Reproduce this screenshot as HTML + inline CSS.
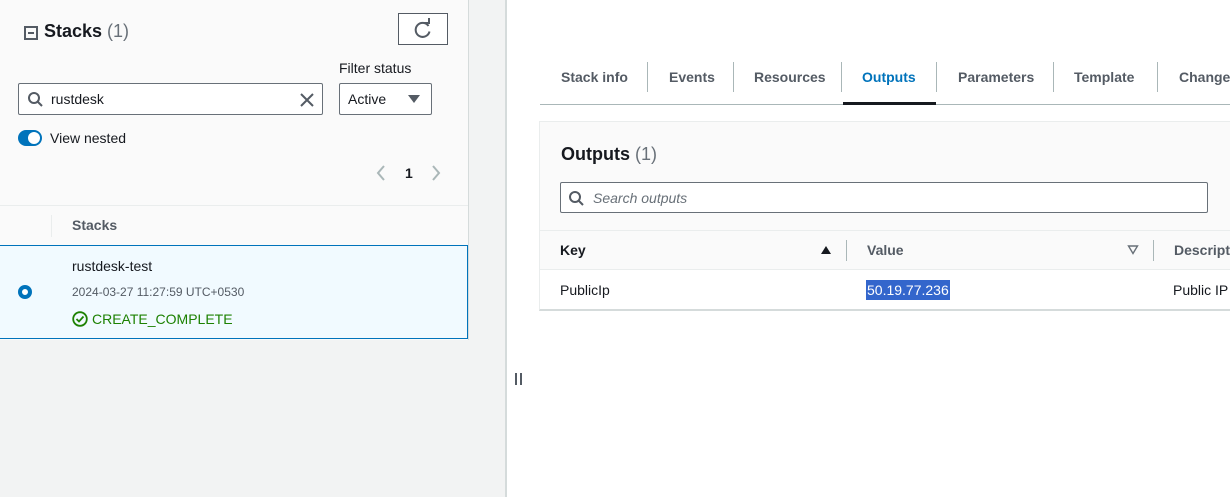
<!DOCTYPE html><html><head><style>
*{box-sizing:border-box;margin:0;padding:0}
body{width:1230px;height:497px;overflow:hidden;font-family:"Liberation Sans",sans-serif;background:#fff;position:relative;color:#16191f}
.abs{position:absolute}
</style></head><body>
<div class="abs" style="left:0;top:0;width:507px;height:497px;background:#f2f3f3;border-right:2px solid #d5dbdb"></div>
<div class="abs" style="left:0;top:0;width:469px;height:340px;background:#fafafa;border-right:1px solid #d5dbdb"></div>
<!-- header -->
<div class="abs" style="left:24px;top:26px;width:14px;height:14px;border:2px solid #545b64"><div style="position:absolute;left:2px;top:4px;width:6px;height:2px;background:#545b64"></div></div>
<div class="abs" style="left:44px;top:21px;font-size:18px;font-weight:bold">Stacks <span style="font-weight:normal;color:#687078">(1)</span></div>
<div class="abs" style="left:398px;top:13px;width:50px;height:32px;border:1px solid #545b64;background:#fff">
<svg width="50" height="32" style="position:absolute;left:-1px;top:-1px"><path d="M30.5 13 A7 7 0 1 0 31.5 18.5" fill="none" stroke="#545b64" stroke-width="2"/><path d="M26 10 L31 10 L31 5" fill="none" stroke="#545b64" stroke-width="2"/></svg></div>
<div class="abs" style="left:339px;top:60px;font-size:14px">Filter status</div>
<div class="abs" style="left:18px;top:83px;width:305px;height:32px;border:1px solid #687078;background:#fff;border-radius:2px">
<svg class="abs" style="left:8px;top:7px" width="18" height="18"><circle cx="7" cy="7" r="5" fill="none" stroke="#545b64" stroke-width="2"/><path d="M11 11 L15 15" stroke="#545b64" stroke-width="2"/></svg>
<span class="abs" style="left:32px;top:7px;font-size:14px">rustdesk</span>
<svg class="abs" style="left:280px;top:8px" width="16" height="16"><path d="M2 2 L14 14 M14 2 L2 14" stroke="#545b64" stroke-width="2"/></svg></div>
<div class="abs" style="left:339px;top:83px;width:93px;height:32px;border:1px solid #687078;background:#fff;border-radius:2px">
<span class="abs" style="left:8px;top:7px;font-size:14px">Active</span>
<svg class="abs" style="left:68px;top:10px" width="12" height="10"><path d="M0 1 L12 1 L6 9Z" fill="#545b64"/></svg></div>
<div class="abs" style="left:18px;top:130px;width:24px;height:16px;border-radius:8px;background:#0073bb"><div style="position:absolute;left:10px;top:2px;width:12px;height:12px;border-radius:6px;background:#fff"></div></div>
<div class="abs" style="left:50px;top:130px;font-size:14px">View nested</div>
<svg class="abs" style="left:375px;top:164px" width="70" height="18"><path d="M9 2 L3 9 L9 16" fill="none" stroke="#aab7b8" stroke-width="2"/><path d="M58 2 L64 9 L58 16" fill="none" stroke="#aab7b8" stroke-width="2"/></svg>
<div class="abs" style="left:405px;top:165px;font-size:14px;font-weight:bold">1</div>
<div class="abs" style="left:0;top:205px;width:468px;height:1px;background:#eaeded"></div>
<div class="abs" style="left:51px;top:215px;width:1px;height:22px;background:#eaeded"></div>
<div class="abs" style="left:72px;top:217px;font-size:14px;font-weight:bold;color:#545b64">Stacks</div>
<div class="abs" style="left:0;top:245px;width:468px;height:94px;background:#f1faff;border:1px solid #0073bb;border-left:none"></div>
<div class="abs" style="left:18px;top:285px;width:14px;height:14px;border-radius:7px;border:4px solid #0073bb;background:#fff"></div>
<div class="abs" style="left:72px;top:258px;font-size:14px">rustdesk-test</div>
<div class="abs" style="left:72px;top:285px;font-size:12px;color:#545b64">2024-03-27 11:27:59 UTC+0530</div>
<svg class="abs" style="left:72px;top:311px" width="16" height="16"><circle cx="8" cy="8" r="6.8" fill="none" stroke="#1d8102" stroke-width="1.8"/><path d="M4.5 8 L7 10.5 L11.5 5.5" fill="none" stroke="#1d8102" stroke-width="1.8"/></svg>
<div class="abs" style="left:92px;top:311px;font-size:14px;color:#1d8102">CREATE_COMPLETE</div>
<div class="abs" style="left:515px;top:373px;width:2px;height:12px;background:#545b64"></div>
<div class="abs" style="left:520px;top:373px;width:2px;height:12px;background:#545b64"></div>
<!-- tabs -->
<div class="abs" style="left:540px;top:104px;width:690px;height:1px;background:#aab7b8"></div>
<div class="abs" style="left:561px;top:69px;font-size:14px;font-weight:bold;color:#545b64">Stack info</div>
<div class="abs" style="left:669px;top:69px;font-size:14px;font-weight:bold;color:#545b64">Events</div>
<div class="abs" style="left:754px;top:69px;font-size:14px;font-weight:bold;color:#545b64">Resources</div>
<div class="abs" style="left:862px;top:69px;font-size:14px;font-weight:bold;color:#0073bb">Outputs</div>
<div class="abs" style="left:958px;top:69px;font-size:14px;font-weight:bold;color:#545b64">Parameters</div>
<div class="abs" style="left:1074px;top:69px;font-size:14px;font-weight:bold;color:#545b64">Template</div>
<div class="abs" style="left:1179px;top:69px;font-size:14px;font-weight:bold;color:#545b64">Change</div>
<div class="abs" style="left:647px;top:62px;width:1px;height:30px;background:#aab7b8"></div>
<div class="abs" style="left:733px;top:62px;width:1px;height:30px;background:#aab7b8"></div>
<div class="abs" style="left:841px;top:62px;width:1px;height:30px;background:#aab7b8"></div>
<div class="abs" style="left:936px;top:62px;width:1px;height:30px;background:#aab7b8"></div>
<div class="abs" style="left:1053px;top:62px;width:1px;height:30px;background:#aab7b8"></div>
<div class="abs" style="left:1157px;top:62px;width:1px;height:30px;background:#aab7b8"></div>
<div class="abs" style="left:843px;top:102px;width:93px;height:3px;background:#16191f"></div>
<!-- outputs panel -->
<div class="abs" style="left:539px;top:121px;width:700px;height:190px;border:1px solid #eaeded;border-bottom:2px solid #d5dbdb;background:#fafafa"></div>
<div class="abs" style="left:561px;top:144px;font-size:18px;font-weight:bold">Outputs <span style="font-weight:normal;color:#687078">(1)</span></div>
<div class="abs" style="left:560px;top:182px;width:648px;height:31px;border:1px solid #687078;background:#fff;border-radius:2px">
<svg class="abs" style="left:7px;top:7px" width="18" height="18"><circle cx="7" cy="7" r="5" fill="none" stroke="#545b64" stroke-width="2"/><path d="M11 11 L15 15" stroke="#545b64" stroke-width="2"/></svg>
<span class="abs" style="left:32px;top:7px;font-size:14px;font-style:italic;color:#687078">Search outputs</span></div>
<div class="abs" style="left:540px;top:230px;width:690px;height:1px;background:#eaeded"></div>
<div class="abs" style="left:540px;top:269px;width:690px;height:1px;background:#eaeded;"></div>
<div class="abs" style="left:540px;top:270px;width:690px;height:39px;background:#fff"></div>
<div class="abs" style="left:560px;top:242px;font-size:14px;font-weight:bold">Key</div>
<svg class="abs" style="left:820px;top:245px" width="12" height="10"><path d="M1 9 L11 9 L6 1Z" fill="#16191f"/></svg>
<div class="abs" style="left:846px;top:240px;width:1px;height:21px;background:#aab7b8"></div>
<div class="abs" style="left:867px;top:242px;font-size:14px;font-weight:bold;color:#545b64">Value</div>
<svg class="abs" style="left:1127px;top:245px" width="12" height="10"><path d="M1.5 1 L10.5 1 L6 8.5Z" fill="none" stroke="#687078" stroke-width="1.4"/></svg>
<div class="abs" style="left:1153px;top:240px;width:1px;height:21px;background:#aab7b8"></div>
<div class="abs" style="left:1174px;top:242px;font-size:14px;font-weight:bold;color:#545b64;white-space:nowrap">Description</div>
<div class="abs" style="left:560px;top:282px;font-size:14px">PublicIp</div>
<div class="abs" style="left:866px;top:280px;height:20px;padding:2px 1px;font-size:14px;background:#3366cc;color:#fff">50.19.77.236</div>
<div class="abs" style="left:1173px;top:282px;font-size:14px;white-space:nowrap">Public IP</div>
</body></html>
